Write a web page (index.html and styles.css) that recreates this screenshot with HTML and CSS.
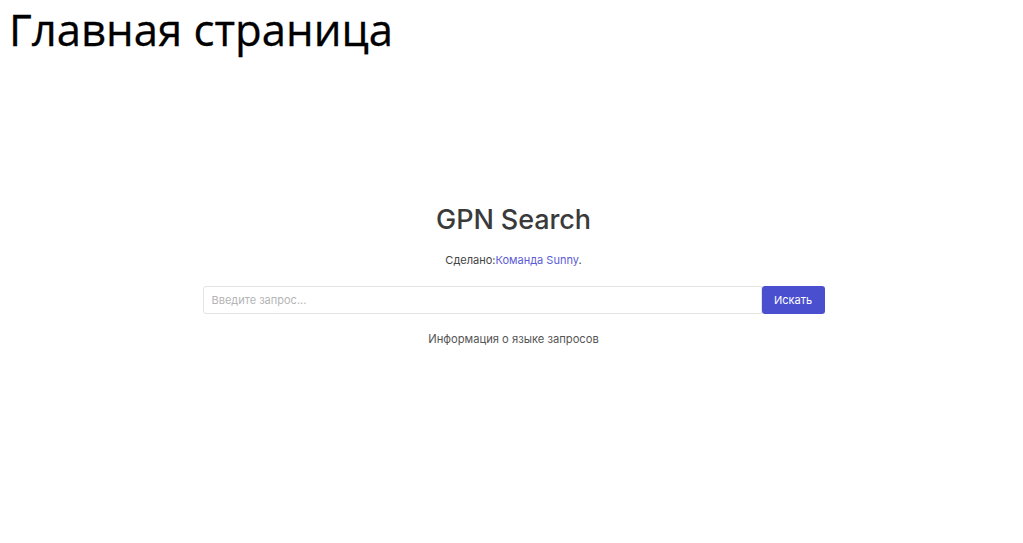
FILE: index.html
```html
<!DOCTYPE html>
<html lang="ru">
<head>
<meta charset="utf-8">
<link rel="stylesheet" href="styles.css">
</head>
<body>
<h1 class="page-title">Главная страница</h1>
<main class="shot">
  <h2 class="brand">GPN Search</h2>
  <p class="credit">Сделано:<a href="#" class="credit-link">Команда Sunny</a>.</p>
  <form class="search">
    <input class="search-input" type="text" placeholder="Введите запрос...">
    <button class="search-btn" type="button">Искать</button>
  </form>
  <p class="info">Информация о языке запросов</p>
</main>
</body>
</html>
```

FILE: styles.css
```css
html, body { margin: 0; padding: 0; background: #fff; }
body { font-family: "Open Sans", "Noto Sans", sans-serif; }
.page-title {
  margin: 0;
  padding: 0 0 0 9px;
  font-family: "Open Sans", sans-serif;
  font-weight: 400;
  font-size: 43.7px;
  line-height: 58px;
  color: #000;
  -webkit-text-stroke: 0.3px #000;
}
.shot {
  display: flex;
  flex-direction: column;
  align-items: center;
  padding-top: 146px;
  padding-left: 4px;
  font-family: Inter, "Liberation Sans", sans-serif;
}
.brand {
  margin: 0;
  font-size: 27px;
  font-weight: 500;
  line-height: 32px;
  color: #3a3a3a;
  letter-spacing: -0.1px;
}
.credit {
  margin: 17px 0 0;
  font-size: 11px;
  line-height: 14px;
  color: #444;
}
.credit-link { color: #5b5bd6; text-decoration: none; }
.search {
  display: flex;
  margin-top: 19px;
  width: 622px;
}
.search-input {
  flex: 1;
  height: 28px;
  box-sizing: border-box;
  border: 1px solid #e3e3e3;
  border-radius: 3px 0 0 3px;
  padding: 0 8px;
  font-family: Inter, "Liberation Sans", sans-serif;
  font-size: 11px;
  outline: none;
}
.search-input::placeholder { color: #b5b5b5; }
.search-btn {
  width: 63px;
  height: 28px;
  border: 0;
  border-radius: 3px;
  background: #4a4fd0;
  color: #fff;
  font-family: Inter, "Liberation Sans", sans-serif;
  font-size: 11px;
  padding: 0;
}
.info {
  margin: 18px 0 0;
  font-size: 11.2px;
  line-height: 14px;
  color: #555;
}
```
